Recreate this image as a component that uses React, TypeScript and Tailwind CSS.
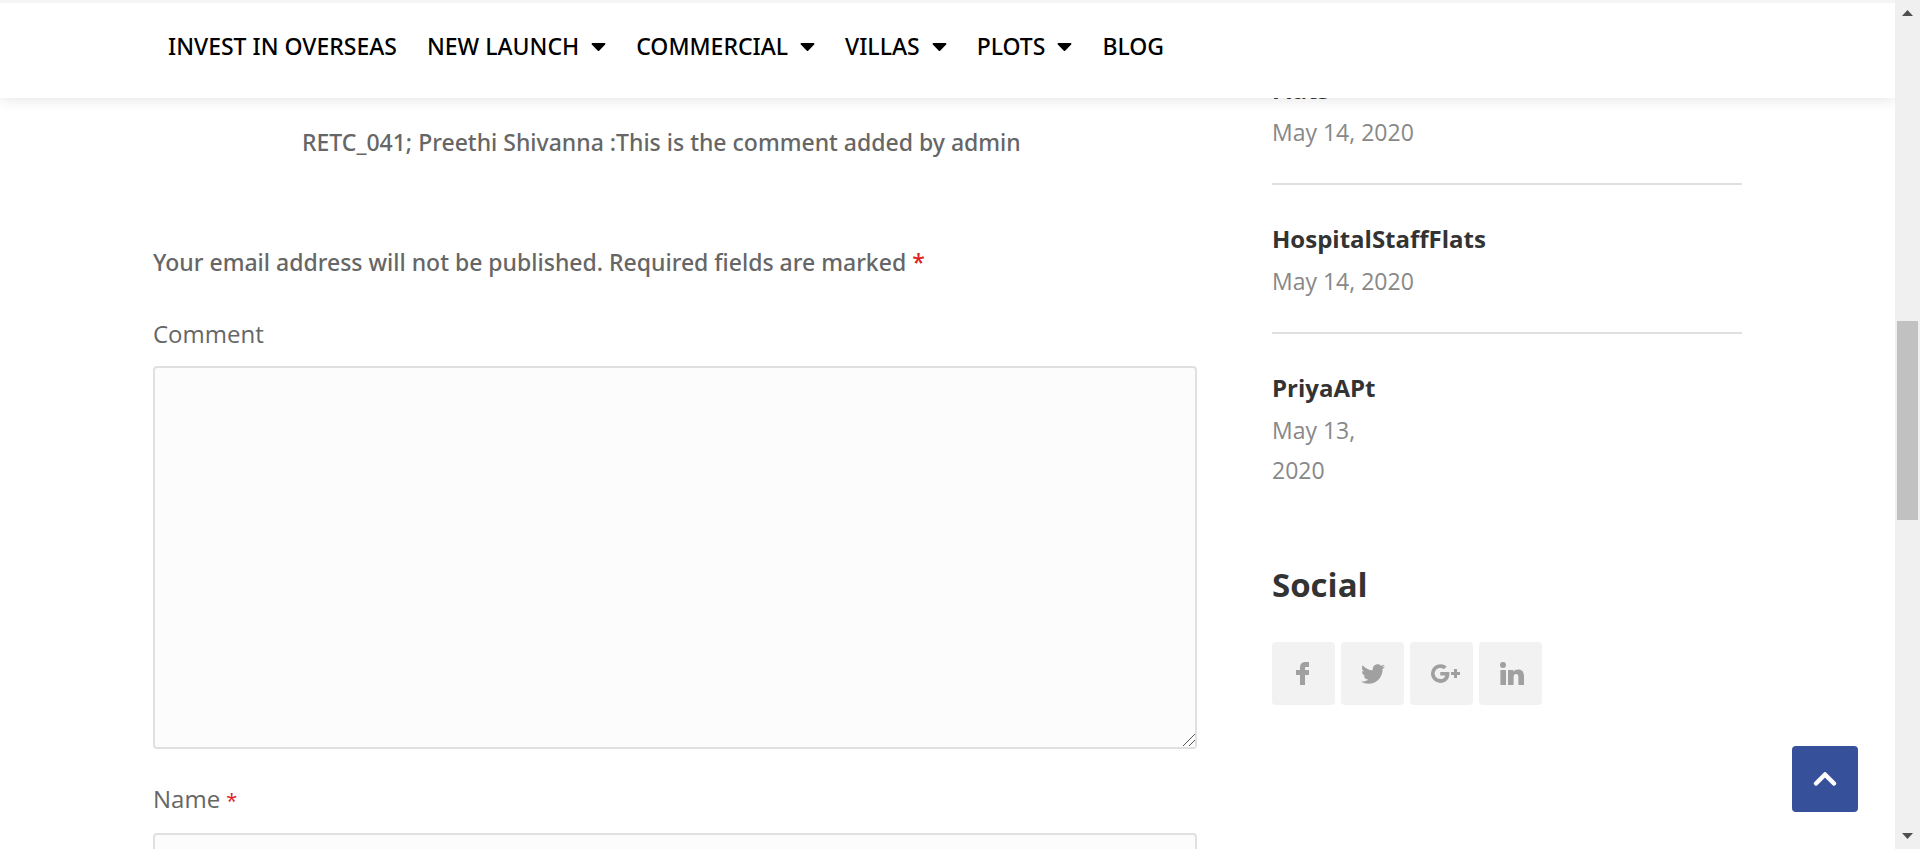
import { FaCaretDown, FaTwitter } from 'react-icons/fa';
import { ChevronUp } from 'lucide-react';

const navItems = [
  { label: 'INVEST IN OVERSEAS', menu: false },
  { label: 'NEW LAUNCH', menu: true },
  { label: 'COMMERCIAL', menu: true },
  { label: 'VILLAS', menu: true },
  { label: 'PLOTS', menu: true },
  { label: 'BLOG', menu: false },
];

function FacebookIcon() {
  return (
    <svg viewBox="0 0 13 23" className="mr-0.5 h-[23px] w-[13px]" fill="currentColor" aria-hidden="true">
      <path d="M4 23V13H0V8h4V6C4 2 6 0 9.500 0H13v5h-2.500C9.300 5 9 5.500 9 6.300V8h4v5H9v10z" />
    </svg>
  );
}

function GooglePlusIcon() {
  return (
    <svg viewBox="0 0 29 19" className="ml-2 h-[19px] w-[29px]" fill="currentColor" aria-hidden="true">
      <path d="M9.300 8v3.400h5c-.5 2.300-2.500 3.700-5 3.700a5.600 5.600 0 1 1 3.700-9.800l2.700-2.700A9.400 9.400 0 1 0 9.300 19c5.400 0 9.100-3.800 9.100-9.200 0-.6-.1-1.200-.2-1.800zM23 5h3v3h3v3h-3v3h-3v-3h-3V8h3z" />
    </svg>
  );
}

function LinkedinIcon() {
  return (
    <svg viewBox="0 0 24 23" className="ml-0.5 h-[23px] w-6" fill="currentColor" aria-hidden="true">
      <circle cx="3" cy="3" r="3" />
      <path d="M.4 8h5.600v15H.4zM8 8h5.500v2c1-1.600 2.600-2.400 4.700-2.400 4 0 5.800 2.600 5.800 6.800V23h-5.600v-7.700c0-2-.8-3.200-2.300-3.200-1.600 0-2.500 1.200-2.500 3.200V23H8z" />
    </svg>
  );
}

const socials = [
  { name: 'Facebook', icon: <FacebookIcon /> },
  { name: 'Twitter', icon: <FaTwitter size={24} /> },
  { name: 'Google Plus', icon: <GooglePlusIcon /> },
  { name: 'LinkedIn', icon: <LinkedinIcon /> },
];

function Header() {
  return (
    <header className="relative z-10 border-t-3 border-[#f5f5f5] bg-white shadow-[0_0_15px_rgba(0,0,0,0.13)]">
      <nav className="flex h-[95px] items-start gap-[30px] px-[168px] pt-[25px] font-['Noto_Sans',sans-serif] text-[23px] leading-9 font-medium text-black">
        {navItems.map((item) => (
          <a key={item.label} href="#" className="flex items-center gap-3 whitespace-nowrap">
            {item.label}
            {item.menu && <FaCaretDown className="h-6 w-[15px]" />}
          </a>
        ))}
      </nav>
    </header>
  );
}

function Post({ title, date, last }: { title: string; date: string; last?: boolean }) {
  return (
    <li className={last ? 'pt-[34px]' : 'border-b-2 border-[#e0e0e0] pt-[34px] pb-[31px]'}>
      <a href="#" className="mb-0.5 block font-bold text-[#333]">{title}</a>
      <span className={last ? 'block w-[100px] text-[23px] text-[#888]' : 'block text-[23px] text-[#888]'}>{date}</span>
    </li>
  );
}

function Scrollbar() {
  return (
    <div className="flex w-[25px] shrink-0 flex-col items-center bg-[#f0f0f0] text-[#505050]" aria-hidden="true">
      <svg viewBox="0 0 11 6" className="mt-2.5 h-1.5 w-[11px]" fill="currentColor"><path d="M5.500 0 11 6H0z" /></svg>
      <div className="basis-[305px]" />
      <div className="h-[199px] w-[21px] bg-[#c1c1c1]" />
      <div className="flex-1" />
      <svg viewBox="0 0 11 6" className="mb-2.5 h-1.5 w-[11px]" fill="currentColor"><path d="M0 0h11L5.500 6z" /></svg>
    </div>
  );
}

export default function App() {
  return (
    <div className="flex h-screen overflow-hidden bg-white font-['Open_Sans',sans-serif] text-[24px] leading-10 text-[#666]">
      <div className="relative min-w-0 flex-1 overflow-hidden">
        <Header />
        <div className="flex gap-[75px] px-[153px]">
          <main className="min-w-0 flex-1 pt-6">
            <p className="pl-[149px] font-['Noto_Sans',sans-serif] text-[23px] font-medium">
              RETC_041; Preethi Shivanna :This is the comment added by admin
            </p>
            <form className="pt-20">
              <p className="font-['Noto_Sans',sans-serif] text-[23px] font-medium">
                Your email address will not be published. Required fields are marked{' '}
                <span className="text-[#e02020]">*</span>
              </p>
              <label htmlFor="comment" className="mt-8 block">Comment</label>
              <div className="relative mt-3">
                <textarea id="comment" className="block h-[383px] w-full rounded-[4px] border-2 border-[#e0e0e0] bg-[#fcfcfc] p-4" />
                <svg viewBox="0 0 14 14" className="pointer-events-none absolute right-0.5 bottom-0.5 size-3.5 bg-[#fcfcfc]" fill="none" stroke="#555" aria-hidden="true">
                  <path d="M2 13 14 1M8 13l6-6" />
                </svg>
              </div>
              <label htmlFor="name" className="mt-[30px] block">
                Name <span className="text-[20px] text-[#e02020]">*</span>
              </label>
              <input id="name" type="text" className="mt-3 block h-[76px] w-full rounded-[4px] border-2 border-[#e0e0e0] bg-[#fcfcfc] px-4" />
            </form>
          </main>
          <aside className="-mt-[62px] w-[470px] shrink-0">
            <ul>
              <Post title="Flats" date="May 14, 2020" />
              <Post title="HospitalStaffFlats" date="May 14, 2020" />
              <Post title="PriyaAPt" date="May 13, 2020" last />
            </ul>
            <h3 className="mt-[71px] text-[33px] leading-12 font-bold text-[#333]">Social</h3>
            <div className="mt-[33px] flex gap-1.5">
              {socials.map((s) => (
                <a key={s.name} href="#" aria-label={s.name} className="flex size-[63px] items-center justify-center rounded-[4px] bg-[#f2f2f2] text-[#a0a0a0]">
                  {s.icon}
                </a>
              ))}
            </div>
          </aside>
        </div>
        <button type="button" aria-label="Back to top" className="absolute right-[37px] bottom-[37px] flex size-[66px] items-center justify-center rounded-[4px] bg-[#365199] text-white">
          <ChevronUp size={36} strokeWidth={3} />
        </button>
      </div>
      <Scrollbar />
    </div>
  );
}
